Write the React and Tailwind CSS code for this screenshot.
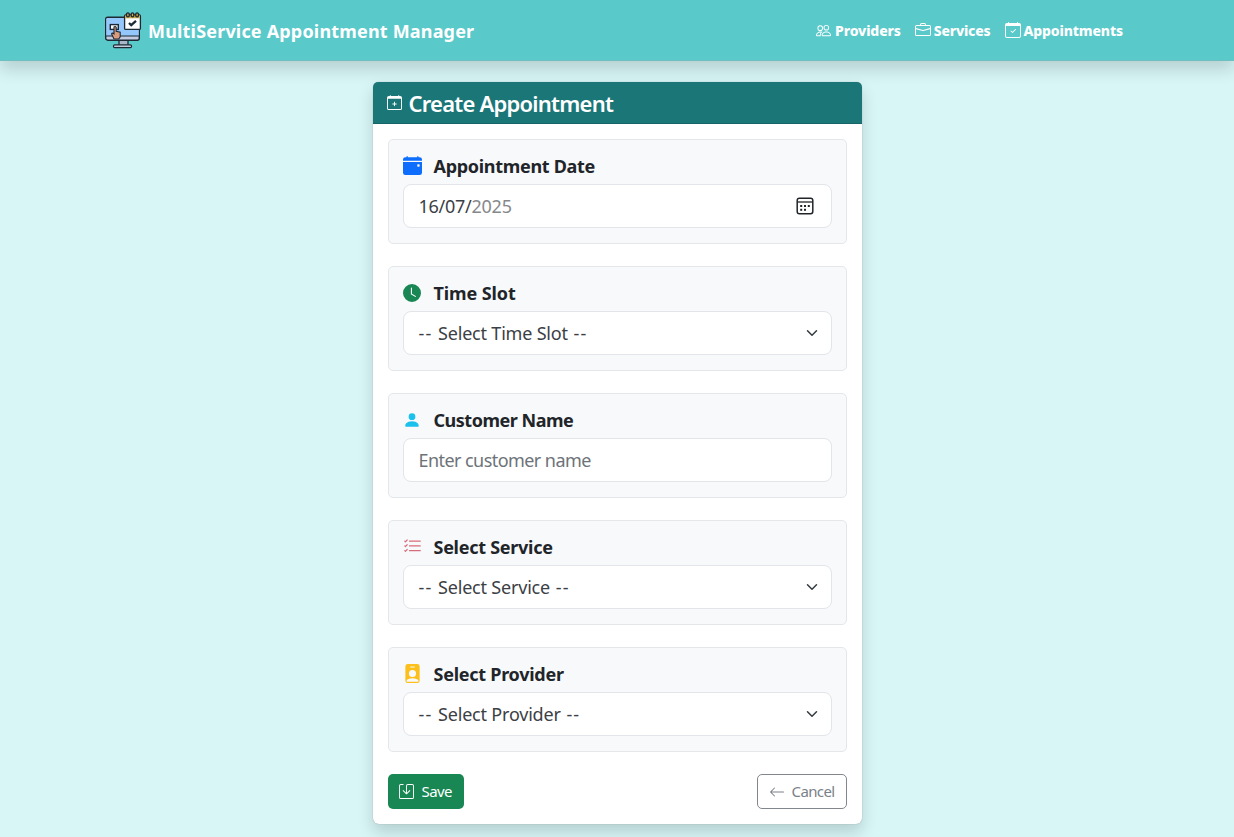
import React from "react";
import {
  BsPeople,
  BsBriefcase,
  BsCalendarCheck,
  BsCalendarPlus,
  BsCalendarEventFill,
  BsClockFill,
  BsPersonFill,
  BsListCheck,
  BsPersonBadgeFill,
  BsSave,
  BsArrowLeft,
} from "react-icons/bs";

function Logo() {
  return (
    <svg width="38" height="38" viewBox="0 0 38 38" className="shrink-0" aria-hidden="true">
      <path d="M15 29h9v6h-9z" fill="#a9b5c8" stroke="#1d2a36" strokeWidth="1.3" />
      <rect x="9.5" y="33.8" width="18" height="2.8" rx="1.2" fill="#c3cddd" stroke="#1d2a36" strokeWidth="1.2" />
      <rect x="1.7" y="6.2" width="33.6" height="23" rx="2" fill="#c3cbe0" stroke="#1d2a36" strokeWidth="1.4" />
      <path d="M2.4 8.3q0-1.4 1.4-1.4h29.8q1 0 1 1.4v16.6H2.4z" fill="#94c7fb" />
      <path d="M2 25h33" stroke="#1d2a36" strokeWidth="1.2" />
      <rect x="6.3" y="13.6" width="8" height="4.8" fill="#fff" stroke="#1d2a36" strokeWidth="1.4" />
      <path d="M10 16q1.2-1 2.2.3v4l4 1v4.5l-1.5 2.2H10L7.6 23q.5-1.6 2.4-.2z" fill="#d99c7c" stroke="#1d2a36" strokeWidth="1.1" />
      <rect x="20.6" y="4" width="15.8" height="14.4" rx="1" fill="#fff" stroke="#1d2a36" strokeWidth="1.3" />
      <path d="M21.2 4.3h14.6v3H21.2z" fill="#c8a94e" />
      <g fill="#d5ad3d" stroke="#1d2a36" strokeWidth="1.4">
        <ellipse cx="23.9" cy="3.9" rx="1.4" ry="2" />
        <ellipse cx="28.5" cy="3.9" rx="1.4" ry="2" />
        <ellipse cx="33.1" cy="3.9" rx="1.4" ry="2" />
      </g>
      <path d="m25 12 2.2 2.1 4.8-4.3" fill="none" stroke="#1d2a36" strokeWidth="2.3" />
    </svg>
  );
}

function Chevron() {
  return (
    <svg width="12" height="12" viewBox="0 0 16 16" fill="none" stroke="#343a40" strokeWidth="2" strokeLinecap="round" strokeLinejoin="round">
      <path d="m2 5 6 6 6-6" />
    </svg>
  );
}

function DatePickerIcon() {
  return (
    <svg width="18" height="18" viewBox="0 0 18 18">
      <rect x="1.2" y="1.2" width="15.6" height="15.6" rx="2.2" fill="none" stroke="#212529" strokeWidth="1.5" />
      <path d="M1.5 5h15" stroke="#212529" strokeWidth="1.3" />
      <g fill="#212529">
        <rect x="4.2" y="8" width="2" height="2" />
        <rect x="8" y="8" width="2" height="2" />
        <rect x="11.8" y="8" width="2" height="2" />
        <rect x="4.2" y="11.8" width="2" height="2" />
        <rect x="8" y="11.8" width="2" height="2" />
      </g>
    </svg>
  );
}

function SelectValue({ children }) {
  return (
    <>
      <span className="pt-px whitespace-pre tracking-[-0.2px]">
        <span className="tracking-[1.1px]">-- </span>
        {children}
        <span className="tracking-[1.1px]"> --</span>
      </span>
      <span className="mr-[13px]"><Chevron /></span>
    </>
  );
}

function Field({ icon, label, labelClass, children }) {
  return (
    <section className="h-[105px] rounded-[5px] border border-[#e4e7ea] bg-[#f8f9fb] px-[15px] pt-3.5">
      <div className="flex h-[25px] items-center">
        <span className="-ml-px mr-px flex w-[18px] shrink-0 justify-center pb-0.5">{icon}</span>
        <span className={`ml-3 whitespace-nowrap text-[18px] leading-[25px] font-bold text-[#212529] ${labelClass}`}>{label}</span>
      </div>
      <div className="mt-[5px] -ml-px flex h-[44px] w-[429px] items-center justify-between rounded-lg border border-[#e2e5e9] bg-white pl-[15px] text-[18px] text-[#3b4045]">
        {children}
      </div>
    </section>
  );
}

export default function App() {
  return (
    <div className="flex h-[837px] w-[1234px] flex-col overflow-hidden bg-[#d8f6f6] font-['Noto_Sans','Open_Sans',sans-serif]">
      <header className="flex h-[61px] shrink-0 items-center justify-between border-b border-[#6fbfc0] bg-[#5ac9ca] pr-[111px] pl-[104px] text-white shadow-[0_8px_16px_rgba(0,0,0,0.16)]">
        <div className="flex items-center gap-[6px]">
          <Logo />
          <span className="pt-0.5 whitespace-nowrap text-[18px] font-bold tracking-[0.18px]">MultiService Appointment Manager</span>
        </div>
        <nav className="flex items-center gap-[14px] text-[14px] font-extrabold whitespace-nowrap">
          <a className="flex items-center gap-1"><BsPeople size={15} /><span className="tracking-[-0.15px]">Providers</span></a>
          <a className="flex items-center gap-[3px]"><BsBriefcase size={16} /><span className="tracking-[-0.2px]">Services</span></a>
          <a className="flex items-center gap-[3px]"><BsCalendarCheck size={16} /><span className="tracking-[-0.15px]">Appointments</span></a>
        </nav>
      </header>

      <main className="mx-auto mt-[21px] h-[742px] w-[489px] shrink-0 rounded-[6px] bg-white shadow-[0_8px_16px_rgba(0,0,0,0.16),0_0_1px_rgba(0,0,0,0.35)]">
        <div className="flex h-[42px] items-center gap-[7px] rounded-t-[5px] border-b border-[#176466] bg-[#1b7678] pl-[14px] text-white">
          <BsCalendarPlus size={15} />
          <h1 className="pt-px whitespace-nowrap text-[22px] leading-[29px] font-semibold tracking-[-0.77px]">Create Appointment</h1>
        </div>
        <div className="flex flex-col gap-[22px] px-[15px] pt-[15px]">
          <Field icon={<BsCalendarEventFill size={19} color="#0d6efd" className="ml-px shrink-0" />} label="Appointment Date" labelClass="tracking-[-0.3px]">
            <span className="pt-px whitespace-nowrap tracking-[-0.26px]">16/07/<span className="text-[#85888b]">2025</span></span>
            <span className="mr-[17px]"><DatePickerIcon /></span>
          </Field>
          <Field icon={<BsClockFill size={18} color="#198754" />} label="Time Slot" labelClass="tracking-[-0.1px]">
            <SelectValue>Select Time Slot</SelectValue>
          </Field>
          <Field icon={<BsPersonFill size={18} color="#1bc1ed" />} label="Customer Name" labelClass="tracking-[-0.48px]">
            <span className="pt-px whitespace-nowrap tracking-[-0.56px] text-[#6d7379]">Enter customer name</span>
          </Field>
          <Field icon={<BsListCheck size={19} color="#d76c7b" className="ml-px shrink-0" />} label="Select Service" labelClass="tracking-[-0.27px]">
            <SelectValue>Select Service</SelectValue>
          </Field>
          <Field icon={<BsPersonBadgeFill size={19} color="#fbc01c" className="ml-px shrink-0" />} label="Select Provider" labelClass="tracking-[-0.26px]">
            <SelectValue>Select Provider</SelectValue>
          </Field>
          <div className="flex justify-between text-[15px]">
            <button className="flex h-[35px] w-[76px] items-center gap-[8px] rounded-[5px] bg-[#198754] pl-[11px] text-white">
              <BsSave size={15} />
              <span className="tracking-[-0.6px]">Save</span>
            </button>
            <button className="flex h-[35px] w-[90px] items-center gap-[7px] rounded-[5px] border border-[#81878d] pl-[11px] text-[#7a8188]">
              <BsArrowLeft size={16} />
              <span className="tracking-[-0.6px]">Cancel</span>
            </button>
          </div>
        </div>
      </main>
    </div>
  );
}
